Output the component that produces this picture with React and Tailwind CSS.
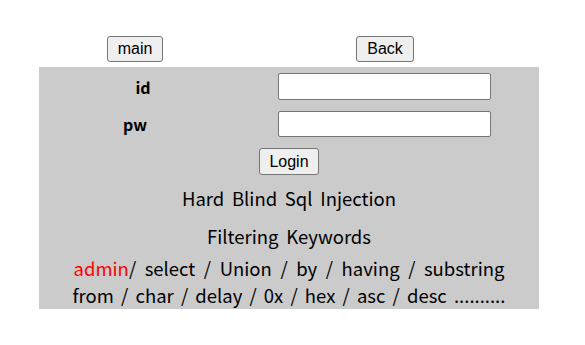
export default function App() {
  const kr = { fontFamily: '"Noto Sans CJK KR", "Noto Sans", sans-serif' }
  const btn =
    'h-[26px] rounded-[3px] border border-[#767676] bg-[#efefef] px-[10px] text-[16px] leading-none text-black'
  return (
    <div className="bg-white pt-[36px]" style={{ fontFamily: '"Liberation Sans", Arial, sans-serif' }}>
      <div className="ml-[39px] w-[500px]">
        <div className="grid grid-cols-[192px_308px]">
          <div className="flex justify-center">
            <button className={btn}>main</button>
          </div>
          <div className="flex justify-center">
            <button className={btn}>Back</button>
          </div>
        </div>
        <div className="mt-[5px] bg-[#cbcbcb]" style={kr}>
          <div className="grid grid-cols-[192px_306px] items-center pt-[6px]">
            <div className="flex h-[27px] items-center justify-center pl-[16px] text-[16px] font-bold">id</div>
            <div className="flex justify-center">
              <input className="h-[27px] w-[213px] rounded-[2px] border border-[#767676] bg-white" />
            </div>
          </div>
          <div className="mt-[11px] grid grid-cols-[192px_306px] items-center">
            <div className="flex h-[26px] items-center justify-center text-[16px] font-bold">pw</div>
            <div className="flex justify-center">
              <input className="h-[26px] w-[213px] rounded-[2px] border border-[#767676] bg-white" />
            </div>
          </div>
          <div className="mt-[11px] flex justify-center">
            <button
              className="h-[27px] rounded-[3px] border border-[#767676] bg-[#efefef] px-[9px] text-[16px] leading-none text-black"
              style={{ fontFamily: '"Liberation Sans", Arial, sans-serif' }}
            >
              Login
            </button>
          </div>
          <div className="mt-[10px] text-center text-[18.5px] leading-[26px] text-black [word-spacing:3.5px]">
            Hard Blind Sql Injection
          </div>
          <div className="mt-[12px] text-center text-[18.5px] leading-[26px] text-black [word-spacing:3.5px]">
            Filtering Keywords
          </div>
          <div className="mt-[6px] text-center text-[18.5px] leading-[27px] text-black">
            <div className="[word-spacing:4.4px]">
              <span className="text-[#ff0000]">admin</span>/ select / Union / by / having / substring
            </div>
            <div className="[word-spacing:3px]">from / char / delay / 0x / hex / asc / desc ..........</div>
          </div>
        </div>
      </div>
    </div>
  )
}
